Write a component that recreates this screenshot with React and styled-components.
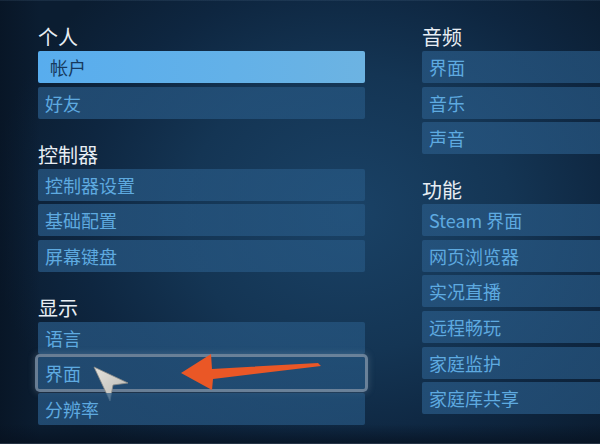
import styled, { createGlobalStyle } from 'styled-components';

const GlobalStyle = createGlobalStyle`
  html, body {
    margin: 0;
    padding: 0;
    background: #0b1b2e;
  }
  body {
    font-family: "Noto Sans CJK SC", "Noto Sans", sans-serif;
  }
`;

const Page = styled.div`
  position: relative;
  width: 600px;
  height: 444px;
  box-sizing: border-box;
  overflow: hidden;
  padding: 25px 0 0 38px;
  display: grid;
  grid-template-columns: 327px 327px;
  column-gap: 57px;
  align-items: start;
  background:
    linear-gradient(180deg, rgba(90, 120, 150, 0.35) 0, rgba(90, 120, 150, 0) 1px),
    linear-gradient(0deg, rgba(120, 140, 160, 0.5) 0, rgba(120, 140, 160, 0) 1px),
    linear-gradient(0deg, rgba(6, 16, 30, 0.7) 0, rgba(6, 16, 30, 0) 20px),
    linear-gradient(90deg, rgba(6, 16, 30, 0.55) 0, rgba(6, 16, 30, 0) 40px),
    radial-gradient(ellipse 60% 70% at 58% 48%, #1a4266 0%, #143554 45%, #0e2640 75%, #0b1d31 100%);
`;

const Column = styled.div`
  display: flex;
  flex-direction: column;
  gap: 24px;
`;

const Section = styled.section`
  display: flex;
  flex-direction: column;
`;

const Heading = styled.h2`
  margin: 0 0 2px;
  height: 24px;
  font-size: 20px;
  line-height: 24px;
  font-weight: 400;
  color: #e8eef4;
`;

const List = styled.div`
  display: flex;
  flex-direction: column;
  gap: 3.6px;
`;

const Row = styled.div`
  position: relative;
  height: 32px;
  display: flex;
  align-items: center;
  box-sizing: border-box;
  padding-left: ${({ $selected }) => ($selected ? '12px' : '7px')};
  border-radius: 2px;
  font-size: 18px;
  color: ${({ $selected }) => ($selected ? '#173a5e' : '#5eaae0')};
  background: ${({ $selected }) =>
    $selected
      ? 'linear-gradient(90deg, #58adee 0%, #63b1e8 60%, #6cb3e2 100%)'
      : 'linear-gradient(90deg, rgba(40, 88, 132, 0.74) 0%, rgba(40, 90, 134, 0.64) 100%)'};
  box-shadow: ${({ $focused }) =>
    $focused
      ? '0 0 0 3px rgba(128, 150, 172, 0.75), 0 0 6px 4px rgba(140, 160, 180, 0.25)'
      : 'none'};
`;

const Annotation = styled.svg`
  position: absolute;
  left: 0;
  top: 0;
  overflow: visible;
  pointer-events: none;
`;

function PointerArrow() {
  return (
    <Annotation width="1" height="1">
      <defs>
        <linearGradient id="cursorFill" x1="0" y1="0" x2="1" y2="1">
          <stop offset="0" stopColor="#e4e2dc" />
          <stop offset="1" stopColor="#b9b8b2" />
        </linearGradient>
      </defs>
      <polygon
        points="143,16 173,-3 174,12 280,6 283,9 175,22 174,33"
        fill="#ea5726"
      />
      <polygon
        points="56,10 90,26 75,28 72,44"
        fill="url(#cursorFill)"
        stroke="#8c8c88"
        strokeWidth="0.8"
        strokeLinejoin="round"
      />
    </Annotation>
  );
}

const sections = {
  left: [
    { title: '个人', items: ['帐户', '好友'], selected: '帐户' },
    { title: '控制器', items: ['控制器设置', '基础配置', '屏幕键盘'] },
    { title: '显示', items: ['语言', '界面', '分辨率'], focused: '界面' },
  ],
  right: [
    { title: '音频', items: ['界面', '音乐', '声音'] },
    {
      title: '功能',
      items: ['Steam 界面', '网页浏览器', '实况直播', '远程畅玩', '家庭监护', '家庭库共享'],
    },
  ],
};

function SettingsColumn({ groups }) {
  return (
    <Column>
      {groups.map((group) => (
        <Section key={group.title}>
          <Heading>{group.title}</Heading>
          <List>
            {group.items.map((item) => (
              <Row
                key={item}
                $selected={group.selected === item}
                $focused={group.focused === item}
              >
                {item}
                {group.focused === item && <PointerArrow />}
              </Row>
            ))}
          </List>
        </Section>
      ))}
    </Column>
  );
}

export default function App() {
  return (
    <>
      <GlobalStyle />
      <Page>
        <SettingsColumn groups={sections.left} />
        <SettingsColumn groups={sections.right} />
      </Page>
    </>
  );
}
